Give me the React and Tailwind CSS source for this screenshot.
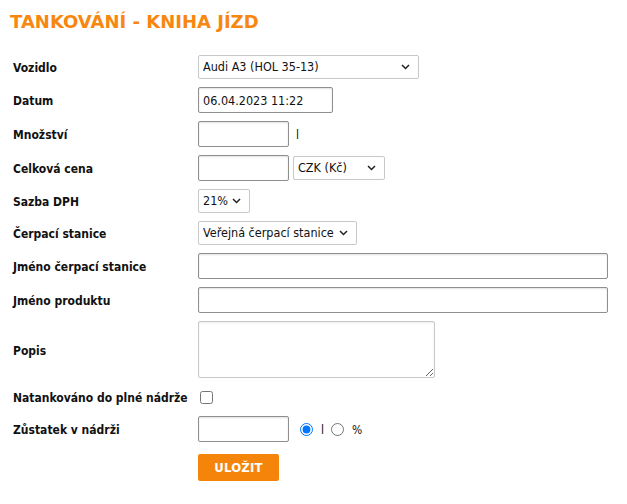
import React from "react";

const Chevron = () => (
  <svg width="9" height="6" viewBox="0 0 9 6" className="absolute right-[9px] top-1/2 -translate-y-1/2 pointer-events-none">
    <path d="M1 1 L4.5 4.5 L8 1" fill="none" stroke="#222" strokeWidth="1.5" />
  </svg>
);

const F = "font-['DejaVu_Sans_Condensed','DejaVu_Sans',sans-serif]";

function Select({ w, children }) {
  return (
    <div className={`relative ${w}`}>
      <select className={`block appearance-none w-full h-[24px] border border-[#c8c8c8] rounded-[2px] bg-white pl-[4px] pr-[18px] text-[12.5px] text-[#111] ${F} outline-none`}>
        {children}
      </select>
      <Chevron />
    </div>
  );
}

function Input({ w, value }) {
  return (
    <input
      type="text"
      defaultValue={value}
      className={`block ${w} h-[26px] border border-[#8f8f8f] rounded-[2px] bg-white px-[4px] text-[12.5px] text-[#111] shadow-[inset_0_1px_2px_rgba(0,0,0,0.12)] outline-none ${F}`}
    />
  );
}

const Label = ({ children }) => (
  <div className={`font-bold text-[12px] leading-[16px] translate-y-[1px] text-[#111] whitespace-nowrap ${F}`}>{children}</div>
);

export default function App() {
  return (
    <div className="w-[627px] h-[504px] bg-white font-['DejaVu_Sans',sans-serif] text-[#111]">
      <h1 className="pl-[10px] pt-[10px] text-[18px] leading-[24px] font-bold text-[#f7870f]">
        TANKOVÁNÍ - KNIHA JÍZD
      </h1>
      <div className="mt-[21px] pl-[13px] grid grid-cols-[185px_auto] gap-y-[8px] items-center">
        <Label>Vozidlo</Label>
        <div className="flex">
          <Select w="w-[221px]">
            <option>Audi A3 (HOL 35-13)</option>
          </Select>
        </div>

        <Label>Datum</Label>
        <div className="flex">
          <Input w="w-[135px]" value="06.04.2023 11:22" />
        </div>

        <Label>Množství</Label>
        <div className="flex items-center">
          <Input w="w-[91px]" />
          <span className={`ml-[7px] translate-y-[1px] text-[12px] ${F}`}>l</span>
        </div>

        <Label>Celková cena</Label>
        <div className="flex items-center">
          <Input w="w-[91px]" />
          <div className="ml-[4px]">
            <Select w="w-[92px]">
              <option>CZK (Kč)</option>
            </Select>
          </div>
        </div>

        <Label>Sazba DPH</Label>
        <div className="flex">
          <Select w="w-[52px]">
            <option>21%</option>
          </Select>
        </div>

        <Label>Čerpací stanice</Label>
        <div className="flex">
          <Select w="w-[159px]">
            <option>Veřejná čerpací stanice</option>
          </Select>
        </div>

        <Label>Jméno čerpací stanice</Label>
        <div className="flex">
          <Input w="w-[410px]" />
        </div>

        <Label>Jméno produktu</Label>
        <div className="flex">
          <Input w="w-[410px]" />
        </div>

        <Label>Popis</Label>
        <div className="flex">
          <textarea className="block w-[237px] h-[57px] border border-[#c8c8c8] rounded-[2px] bg-white shadow-[inset_0_1px_2px_rgba(0,0,0,0.08)] outline-none" />
        </div>

        <Label>Natankováno do plné nádrže</Label>
        <div className="flex items-center h-[22px]">
          <input type="checkbox" className="m-0 ml-[2px] w-[13px] h-[13px]" />
        </div>

        <Label>Zůstatek v nádrži</Label>
        <div className="flex items-center">
          <Input w="w-[91px]" />
          <input type="radio" name="u" defaultChecked className="m-0 ml-[11px] w-[13px] h-[13px]" />
          <span className={`ml-[8px] translate-y-[1px] text-[12px] ${F}`}>l</span>
          <input type="radio" name="u" className="m-0 ml-[7px] w-[13px] h-[13px]" />
          <span className={`ml-[8px] translate-y-[1px] text-[12px] ${F}`}>%</span>
        </div>

        <div />
        <div className="flex mt-[4px]">
          <button className={`w-[81px] h-[27px] bg-[#f5850a] rounded-[2px] text-white font-bold text-[13px] tracking-[0.2px] ${F}`}>
            ULOŽIT
          </button>
        </div>
      </div>
    </div>
  );
}
